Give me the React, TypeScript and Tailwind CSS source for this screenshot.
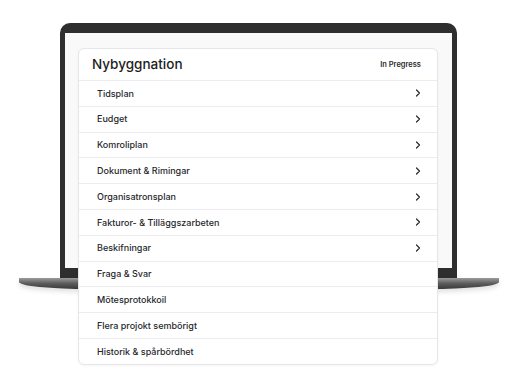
const rows: { label: string; arrow: boolean }[] = [
  { label: 'Tidsplan', arrow: true },
  { label: 'Eudget', arrow: true },
  { label: 'Komroliplan', arrow: true },
  { label: 'Dokument & Rimingar', arrow: true },
  { label: 'Organisatronsplan', arrow: true },
  { label: 'Fakturor- & Tilläggszarbeten', arrow: true },
  { label: 'Beskifningar', arrow: true },
  { label: 'Fraga & Svar', arrow: false },
  { label: 'Mötesprotokkoil', arrow: false },
  { label: 'Flera projokt sembörigt', arrow: false },
  { label: 'Historik & spårbördhet', arrow: false },
];

function Chevron() {
  return (
    <svg width="6" height="8" viewBox="0 0 6 8" fill="none" className="shrink-0">
      <path d="M1.5 1 L4.5 4 L1.5 7" stroke="#2a2a2a" strokeWidth="1.2" strokeLinecap="round" strokeLinejoin="round" />
    </svg>
  );
}

export default function App() {
  return (
    <div
      className="w-[525px] h-[389px] bg-white overflow-hidden pt-[23px]"
      style={{ fontFamily: 'Inter, "Noto Sans", sans-serif' }}
    >
      <div className="flex flex-col items-start">
        {/* lid */}
        <div className="ml-[60px] w-[397px] h-[255px] bg-[#2e2e2e] rounded-t-[10px] px-[5px] pt-[10px] pb-[10px]">
          <div className="h-full bg-[#f9f9fa] pt-[15px] pl-[13px] pr-[14px]">
            <div className="relative z-20 bg-white border border-[#e6e6ea] rounded-[6px] shadow-[0_1px_3px_rgba(0,0,0,0.04)] overflow-hidden">
              <div className="h-[31px] flex items-center justify-between pl-[13px] pr-[16px]">
                <span className="text-[13.5px] font-medium text-[#1b1d22]">Nybyggnation</span>
                <span className="text-[7.5px] font-semibold text-[#2a2a2a]">In Pregress</span>
              </div>
              {rows.map((r) => (
                <div
                  key={r.label}
                  className="h-[25.8px] border-t border-[#ececf0] flex items-center justify-between pl-[18px] pr-[16px]"
                >
                  <span className="text-[9px] font-medium text-[#26282c]">{r.label}</span>
                  {r.arrow && <Chevron />}
                </div>
              ))}
            </div>
          </div>
        </div>
        {/* base */}
        <div className="relative z-10 ml-[19px] w-[480px] h-[11px] rounded-b-[70px_7px] bg-gradient-to-b from-[#9c9c9c] via-[#5c5c5c] to-[#3a3a3a] shadow-[0_3px_5px_rgba(0,0,0,0.12)]" />
      </div>
    </div>
  );
}
